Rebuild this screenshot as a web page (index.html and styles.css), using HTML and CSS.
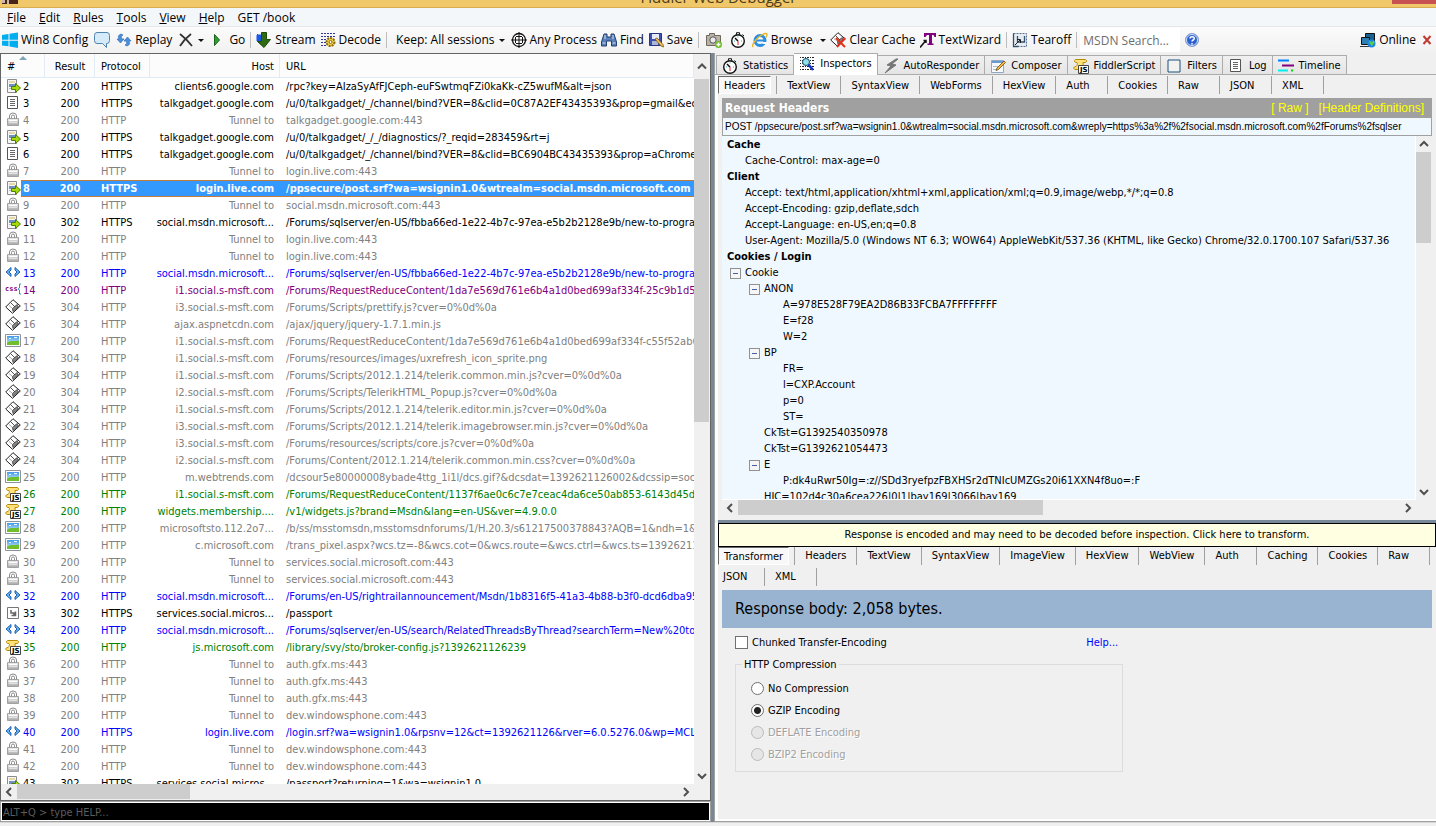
FILE: index.html
```html
<!DOCTYPE html>
<html lang="en">

<head>
  <meta charset="UTF-8">
  <title>Fiddler Web Debugger</title>
  <link rel="stylesheet" href="styles.css">
</head>

<body>

  <!-- shared icons -->
  <svg class="defs" aria-hidden="true">
    <linearGradient id="g-sky" x1="0" y1="0" x2="0" y2="1">
      <stop offset="0" stop-color="#3f9be8" />
      <stop offset="1" stop-color="#d8efff" />
    </linearGradient>
    <linearGradient id="g-lock" x1="0" y1="0" x2="0" y2="1">
      <stop offset="0" stop-color="#f0f0f0" />
      <stop offset="1" stop-color="#a8a8a8" />
    </linearGradient>
    <symbol id="i-post" viewBox="0 0 16 16">
      <path d="M2.500 1.500h9v13h-9z" fill="#f4f6f8" stroke="#8c8c8c" />
      <path d="M4 3h6v2H4z" fill="#e8d9a0" />
      <path d="M4 6h6v3H4z" fill="#6f93c4" />
      <path d="M4 10h3v1H4z" fill="#bbb" />
      <path d="M6.500 8.500h4v-3l5 4.500-5 4.500v-3h-4z" fill="#a6d80c" stroke="#4a7d00" />
    </symbol>
    <symbol id="i-doc" viewBox="0 0 16 16">
      <path d="M2.500 1.500h10v12h-10z" fill="#fff" stroke="#555" />
      <path d="M5 4.500h5M5 6.500h5M5 8.500h5M5 10.500h5" stroke="#666" />
    </symbol>
    <symbol id="i-lock" viewBox="0 0 16 16">
      <path d="M4.500 6V4q0-3 3.500-3t3.500 3v2" fill="none" stroke="#8a8a8a" />
      <path d="M6.500 6V4.500q0-1.500 1.500-1.500t1.500 1.500V6" fill="none" stroke="#8a8a8a" />
      <path d="M2.500 6.500h11v7h-11z" fill="url(#g-lock)" stroke="#a0a0a0" />
      <path d="M4 8.500h8" stroke="#fff" />
      <path d="M4 10.500h8" stroke="#e4e4e4" />
    </symbol>
    <symbol id="i-html" viewBox="0 0 16 16">
      <path d="M6 2.500 1 7l5 4.500V9L4 7l2-2z" fill="#6bb1ee" stroke="#1f62b0" />
      <path d="M10 2.500 15 7l-5 4.500V9l2-2-2-2z" fill="#6bb1ee" stroke="#1f62b0" />
    </symbol>
    <symbol id="i-css" viewBox="0 0 16 16">
      <text x="0" y="9" font-size="7" font-weight="bold" font-family="DejaVu Sans Mono, monospace" fill="#80007f">css</text>
      <path d="M16 2h-1.500v4L13 7l1.500 1v4H16" fill="none" stroke="#3a8fb0" />
    </symbol>
    <symbol id="i-cache" viewBox="0 0 16 16">
      <path d="M8 .7 15.300 7 7.500 14.300.7 8z" fill="#fff" stroke="#222" />
      <path d="M5.500 3.500 10 8l3-2.500" fill="none" stroke="#555" />
      <path d="M7.500 9.500 11.500 6l2 1.500-5.500 5z" fill="#8a8a8a" stroke="#333" stroke-width=".8" />
      <path d="M4 6.500 7 9" stroke="#aaa" />
    </symbol>
    <symbol id="i-img" viewBox="0 0 16 16">
      <path d="M.5 1.500h15v12H.5z" fill="#fff" stroke="#8d939b" />
      <path d="M2 3h12v9H2z" fill="url(#g-sky)" />
      <path d="M2 9.500c4-2.500 8-1 12-2V12H2z" fill="#6fbf2c" />
      <path d="M4 5h2v1H4zM9 4h3v1H9z" fill="#fff" />
    </symbol>
    <symbol id="i-js" viewBox="0 0 16 16">
      <path d="M3 1.500h9c2 0 2 3 0 3h-2c1 3-2 5-1 7H3c-3 0-3-3 0-3 1-1 2-3 1-4H3C1 4.500 1 1.500 3 1.500z" fill="#ffe27a" stroke="#b98a00" />
      <path d="M5.500 7.500h10v8h-10z" fill="#fff" stroke="#444" />
      <text x="7" y="14" font-size="7" font-weight="bold" font-family="DejaVu Sans, sans-serif" fill="#000">JS</text>
    </symbol>
    <symbol id="i-redir" viewBox="0 0 16 16">
      <path d="M2.500 2.500h11v11h-11z" fill="#fff" stroke="#777" />
      <path d="M6 5v3h3v3M6.500 10.500h4v-4" fill="none" stroke="#666" stroke-width="1.500" />
    </symbol>
    <symbol id="i-watch" viewBox="0 0 16 16">
      <circle cx="8" cy="9" r="6.300" fill="#fff" stroke="#111" stroke-width="1.400" />
      <path d="M6.500.7h3v2h-3zM12.500 2.500l1.500 1.500" fill="#fff" stroke="#111" />
      <path d="M8 9 5 6" stroke="#111" stroke-width="1.500" />
      <path d="M8 9v4" stroke="#e02020" />
      <path d="M8 4.500v1M12 9h-1M4 9h1" stroke="#3ab" />
    </symbol>
    <symbol id="i-up" viewBox="0 0 16 16">
      <path d="M4 10l4-4 4 4" fill="none" stroke="#505050" stroke-width="2" />
    </symbol>
    <symbol id="i-down" viewBox="0 0 16 16">
      <path d="M4 6l4 4 4-4" fill="none" stroke="#505050" stroke-width="2" />
    </symbol>
    <symbol id="i-left" viewBox="0 0 16 16">
      <path d="M10 4 6 8l4 4" fill="none" stroke="#505050" stroke-width="2" />
    </symbol>
    <symbol id="i-right" viewBox="0 0 16 16">
      <path d="M6 4l4 4-4 4" fill="none" stroke="#505050" stroke-width="2" />
    </symbol>
  </svg>

  <header class="titlebar">
    <svg class="appicon" viewBox="0 0 16 4"><path d="M0 0h16v4H0z" fill="#4a2418" /><path d="M0 0h3v3H0zM5 0h2v4H5z" fill="#c9b8ae" /></svg>
    <span class="caption">Fiddler Web Debugger</span>
    <span class="closebox"></span>
  </header>

  <nav class="menubar">
    <a href="#"><u>F</u>ile</a>
    <a href="#"><u>E</u>dit</a>
    <a href="#"><u>R</u>ules</a>
    <a href="#"><u>T</u>ools</a>
    <a href="#"><u>V</u>iew</a>
    <a href="#"><u>H</u>elp</a>
    <a href="#">GET /book</a>
  </nav>

  <div class="toolbar">
    <button type="button"><svg class="ico" viewBox="0 0 16 16"><path d="M0 3l6.500-1v5.700H0zM7.500 1.800 16 .5v7.200H7.500zM0 8.700h6.500v5.600L0 13.400zM7.500 8.700H16V16l-8.500-1.400z" fill="#00adef" /></svg>Win8 Config</button>
    <button type="button" class="wide" aria-label="Comment"><svg class="ico" viewBox="0 0 16 16"><path d="M3 .5h10q2.500 0 2.500 3v5q0 3-2.500 3h-.5V15.500l-4-4H3Q.5 11.500.5 8.500v-5q0-3 2.500-3z" fill="#d5ebfa" stroke="#4f83af" /></svg></button>
    <button type="button"><svg class="ico" viewBox="0 0 16 16"><path d="M5 2C2 3 2 5 3 7H1l3.500 4L8 7H6C5 5 5 4 7 3z" fill="#4a8fdc" stroke="#2b67b0" stroke-width=".6" /><path d="M11 14c3-1 3-3 2-5h2l-3.500-4L8 9h2c1 2 1 3-1 4z" fill="#4a8fdc" stroke="#2b67b0" stroke-width=".6" /></svg>Replay</button>
    <button type="button" class="wide" aria-label="Remove"><svg class="ico" viewBox="0 0 16 16"><path d="M2 2c4 3 8 7 12 12M13 2C9 5 5 9 2 14" fill="none" stroke="#333" stroke-width="1.800" /></svg><i class="caret"></i></button>
    <button type="button"><svg class="ico" viewBox="0 0 16 16"><path d="M4.500 2.500 9.500 8l-5 5.500z" fill="#2f9e2f" stroke="#17641a" /></svg>Go</button>
    <i class="sep"></i>
    <button type="button"><svg class="ico" viewBox="0 0 16 16"><path d="M1 3h5v6H1zM1 2 5 6" fill="#1c58e8" stroke="#1c58e8" /><path d="M5.500.5h5v7h4L8 15.500 1.500 9.500h4z" fill="#2f6b14" stroke="#1c4a08" /></svg>Stream</button>
    <button type="button"><svg class="ico" viewBox="0 0 16 16"><path d="M1 1.500h14M1 4.500h14M1 7.500h6M1 10.500h5M1 13.500h5" stroke="#33339c" stroke-dasharray="2 1" /><circle cx="10.500" cy="10" r="4" fill="#f3d34a" stroke="#8a6a00" stroke-dasharray="2 1" stroke-width="2" /><circle cx="10.500" cy="10" r="1.500" fill="#fff" stroke="#8a6a00" /></svg>Decode</button>
    <i class="sep"></i>
    <button type="button" class="keep">Keep: All sessions<i class="caret"></i></button>
    <button type="button"><svg class="ico" viewBox="0 0 16 16"><circle cx="8" cy="8" r="6.500" fill="#fff" stroke="#111" stroke-width="1.300" /><path d="M8 0v16M0 8h16M4.500 5v6M11.500 5v6M5 4.500h6M5 11.500h6" stroke="#111" stroke-width="1" /></svg>Any Process</button>
    <button type="button"><svg class="ico" viewBox="0 0 16 16"><path d="M3 2h3v3h4V2h3l2.500 8v4h-5V9h-5v5h-5v-4z" fill="#5b7fb8" stroke="#24406e" /><path d="M1.500 11h3M11.500 11h3M4 3v4M12 3v4" stroke="#cfe0f5" /></svg>Find</button>
    <button type="button"><svg class="ico" viewBox="0 0 16 16"><path d="M1.500 1.500h12v12h-12z" fill="#3f51b0" stroke="#27357e" /><path d="M4 2h7v5H4z" fill="#e4e9f8" /><path d="M4 9h6v4H4z" fill="#a9b6d8" /><path d="M7 7l6 7 2.500 1-.5-2.500-6-6.500z" fill="#f1c355" stroke="#7a5310" stroke-width=".8" /></svg>Save</button>
    <i class="sep"></i>
    <button type="button" class="wide" aria-label="Screenshot"><svg class="ico" viewBox="0 0 16 16"><path d="M.5 3.500h3v-2h5v2h6v10H.5z" fill="#b9b3a6" stroke="#6e695f" /><circle cx="7" cy="8" r="3.200" fill="#e9e9e9" stroke="#555" /><circle cx="12.500" cy="12.500" r="3.500" fill="#6cbf22" /><path d="M12.500 10.500v4M10.500 12.500h4" stroke="#fff" stroke-width="1.500" /></svg></button>
    <button type="button" class="wide" aria-label="Timer"><svg class="ico"><use href="#i-watch" /></svg></button>
    <button type="button" class="browse"><svg class="ico" viewBox="0 0 16 16"><circle cx="8" cy="8.500" r="5" fill="none" stroke="#2a8ee0" stroke-width="3" /><path d="M4 8.500h9" stroke="#2a8ee0" stroke-width="2" /><path d="M10.500 10h5v2h-5z" fill="#fafafa" /><path d="M1 15C-1 12 7 3 13 1.500c3-.5 2 2 1 4" fill="none" stroke="#e8b72a" stroke-width="1.500" /></svg>Browse<i class="caret"></i></button>
    <button type="button"><svg class="ico" viewBox="0 0 16 16"><use href="#i-cache" /><path d="M6 6l9 9M15 6l-8 9" stroke="#e23018" stroke-width="2" /></svg>Clear Cache</button>
    <button type="button"><svg class="ico" viewBox="0 0 16 16"><path d="M4 1h12v4h-1.500L13.500 3H12v8.500h1.500V13h-6v-1.500H9V3H7L5.500 5H4z" fill="#80007f" /><path d="M0 15.500 5.500 9M3.500 8.500H6V11" fill="none" stroke="#111" stroke-width="1.500" /></svg>TextWizard</button>
    <i class="sep"></i>
    <button type="button"><svg class="ico" viewBox="0 0 16 16"><path d="M1.500 1.500h13v13h-13z" fill="#e7ecf3" stroke="#58708f" stroke-dasharray="2 1" /><path d="M1.500 1.500v13h5M5.500 4v6h7V4" fill="none" stroke="#33506f" stroke-width="1.300" /><path d="M3 13l5-5M5 7.500h3.500V11" fill="none" stroke="#222" /></svg>Tearoff</button>
    <i class="sep"></i>
    <input class="msdn" type="text" aria-label="MSDN search" placeholder="MSDN Search...">
    <button type="button" class="wide" aria-label="Help"><svg class="ico" viewBox="0 0 16 16"><circle cx="8" cy="8" r="6.500" fill="#2a5fd0" stroke="#8aa0cc" /><circle cx="8" cy="8" r="5.500" fill="none" stroke="#d6e2fb" /><path d="M6 6.500C6 4 10.300 4 10.300 6.500 10.300 8 8 8 8 9.500M8 11v1.500" fill="none" stroke="#fff" stroke-width="1.500" /></svg></button>
    <button type="button" class="online"><svg class="ico" viewBox="0 0 16 16"><path d="M5.500 1.500h9v8h-9z" fill="#1a6390" stroke="#111" /><path d="M1.500 5.500h8v7h-8z" fill="#2d7fb0" stroke="#111" /><path d="M0 14.500h10" stroke="#333" /><circle cx="11.500" cy="11.500" r="4" fill="#1f86e8" /><path d="M9 9l3 1 2-1.500.5 2L12 14l-2-2z" fill="#55d04a" /></svg>Online</button>
    <button type="button" class="wide" aria-label="Close toolbar"><svg class="cross" viewBox="0 0 10 10"><path d="M1.500 1l7 8M8.500 1l-7 8" stroke="#c03a34" stroke-width="2" /></svg></button>
  </div>

  <main class="workspace">

    <section class="sessions">
      <div class="grid">
        <div class="listview">
          <table>
            <colgroup>
              <col class="c-icon">
              <col class="c-id">
              <col class="c-result">
              <col class="c-protocol">
              <col class="c-host">
              <col>
            </colgroup>
            <thead>
              <tr>
                <th colspan="2" class="sorted">#</th>
                <th>Result</th>
                <th>Protocol</th>
                <th>Host</th>
                <th>URL</th>
              </tr>
            </thead>
            <tbody>
              <tr><td><svg class="ico"><use href="#i-post" /></svg></td><td>2</td><td>200</td><td>HTTPS</td><td>clients6.google.com</td><td>/rpc?key=AIzaSyAfFJCeph-euFSwtmqFZi0kaKk-cZ5wufM&amp;alt=json</td></tr>
              <tr><td><svg class="ico"><use href="#i-doc" /></svg></td><td>3</td><td>200</td><td>HTTPS</td><td>talkgadget.google.com</td><td>/u/0/talkgadget/_/channel/bind?VER=8&amp;clid=0C87A2EF43435393&amp;prop=gmail&amp;ec=%5B</td></tr>
              <tr class="dim"><td><svg class="ico"><use href="#i-lock" /></svg></td><td>4</td><td>200</td><td>HTTP</td><td>Tunnel to</td><td>talkgadget.google.com:443</td></tr>
              <tr><td><svg class="ico"><use href="#i-post" /></svg></td><td>5</td><td>200</td><td>HTTPS</td><td>talkgadget.google.com</td><td>/u/0/talkgadget/_/_/diagnostics/?_reqid=283459&amp;rt=j</td></tr>
              <tr><td><svg class="ico"><use href="#i-doc" /></svg></td><td>6</td><td>200</td><td>HTTPS</td><td>talkgadget.google.com</td><td>/u/0/talkgadget/_/channel/bind?VER=8&amp;clid=BC6904BC43435393&amp;prop=aChromeExt</td></tr>
              <tr class="dim"><td><svg class="ico"><use href="#i-lock" /></svg></td><td>7</td><td>200</td><td>HTTP</td><td>Tunnel to</td><td>login.live.com:443</td></tr>
              <tr class="selected"><td><svg class="ico"><use href="#i-post" /></svg></td><td>8</td><td>200</td><td>HTTPS</td><td>login.live.com</td><td>/ppsecure/post.srf?wa=wsignin1.0&amp;wtrealm=social.msdn.microsoft.com</td></tr>
              <tr class="dim"><td><svg class="ico"><use href="#i-lock" /></svg></td><td>9</td><td>200</td><td>HTTP</td><td>Tunnel to</td><td>social.msdn.microsoft.com:443</td></tr>
              <tr><td><svg class="ico"><use href="#i-post" /></svg></td><td>10</td><td>302</td><td>HTTPS</td><td>social.msdn.microsoft...</td><td>/Forums/sqlserver/en-US/fbba66ed-1e22-4b7c-97ea-e5b2b2128e9b/new-to-programming</td></tr>
              <tr class="dim"><td><svg class="ico"><use href="#i-lock" /></svg></td><td>11</td><td>200</td><td>HTTP</td><td>Tunnel to</td><td>login.live.com:443</td></tr>
              <tr class="dim"><td><svg class="ico"><use href="#i-lock" /></svg></td><td>12</td><td>200</td><td>HTTP</td><td>Tunnel to</td><td>login.live.com:443</td></tr>
              <tr class="html"><td><svg class="ico"><use href="#i-html" /></svg></td><td>13</td><td>200</td><td>HTTP</td><td>social.msdn.microsoft...</td><td>/Forums/sqlserver/en-US/fbba66ed-1e22-4b7c-97ea-e5b2b2128e9b/new-to-programming</td></tr>
              <tr class="css"><td><svg class="ico"><use href="#i-css" /></svg></td><td>14</td><td>200</td><td>HTTP</td><td>i1.social.s-msft.com</td><td>/Forums/RequestReduceContent/1da7e569d761e6b4a1d0bed699af334f-25c9b1d5c</td></tr>
              <tr class="dim"><td><svg class="ico"><use href="#i-cache" /></svg></td><td>15</td><td>304</td><td>HTTP</td><td>i3.social.s-msft.com</td><td>/Forums/Scripts/prettify.js?cver=0%0d%0a</td></tr>
              <tr class="dim"><td><svg class="ico"><use href="#i-cache" /></svg></td><td>16</td><td>304</td><td>HTTP</td><td>ajax.aspnetcdn.com</td><td>/ajax/jquery/jquery-1.7.1.min.js</td></tr>
              <tr class="dim"><td><svg class="ico"><use href="#i-img" /></svg></td><td>17</td><td>200</td><td>HTTP</td><td>i1.social.s-msft.com</td><td>/Forums/RequestReduceContent/1da7e569d761e6b4a1d0bed699af334f-c55f52ab66</td></tr>
              <tr class="dim"><td><svg class="ico"><use href="#i-cache" /></svg></td><td>18</td><td>304</td><td>HTTP</td><td>i1.social.s-msft.com</td><td>/Forums/resources/images/uxrefresh_icon_sprite.png</td></tr>
              <tr class="dim"><td><svg class="ico"><use href="#i-cache" /></svg></td><td>19</td><td>304</td><td>HTTP</td><td>i1.social.s-msft.com</td><td>/Forums/Scripts/2012.1.214/telerik.common.min.js?cver=0%0d%0a</td></tr>
              <tr class="dim"><td><svg class="ico"><use href="#i-cache" /></svg></td><td>20</td><td>304</td><td>HTTP</td><td>i2.social.s-msft.com</td><td>/Forums/Scripts/TelerikHTML_Popup.js?cver=0%0d%0a</td></tr>
              <tr class="dim"><td><svg class="ico"><use href="#i-cache" /></svg></td><td>21</td><td>304</td><td>HTTP</td><td>i1.social.s-msft.com</td><td>/Forums/Scripts/2012.1.214/telerik.editor.min.js?cver=0%0d%0a</td></tr>
              <tr class="dim"><td><svg class="ico"><use href="#i-cache" /></svg></td><td>22</td><td>304</td><td>HTTP</td><td>i3.social.s-msft.com</td><td>/Forums/Scripts/2012.1.214/telerik.imagebrowser.min.js?cver=0%0d%0a</td></tr>
              <tr class="dim"><td><svg class="ico"><use href="#i-cache" /></svg></td><td>23</td><td>304</td><td>HTTP</td><td>i3.social.s-msft.com</td><td>/Forums/resources/scripts/core.js?cver=0%0d%0a</td></tr>
              <tr class="dim"><td><svg class="ico"><use href="#i-cache" /></svg></td><td>24</td><td>304</td><td>HTTP</td><td>i2.social.s-msft.com</td><td>/Forums/Content/2012.1.214/telerik.common.min.css?cver=0%0d%0a</td></tr>
              <tr class="dim"><td><svg class="ico"><use href="#i-img" /></svg></td><td>25</td><td>200</td><td>HTTP</td><td>m.webtrends.com</td><td>/dcsour5e80000008ybade4ttg_1i1l/dcs.gif?&amp;dcsdat=1392621126002&amp;dcssip=social.</td></tr>
              <tr class="js"><td><svg class="ico"><use href="#i-js" /></svg></td><td>26</td><td>200</td><td>HTTP</td><td>i1.social.s-msft.com</td><td>/Forums/RequestReduceContent/1137f6ae0c6c7e7ceac4da6ce50ab853-6143d45df2</td></tr>
              <tr class="js"><td><svg class="ico"><use href="#i-js" /></svg></td><td>27</td><td>200</td><td>HTTP</td><td>widgets.membership....</td><td>/v1/widgets.js?brand=Msdn&amp;lang=en-US&amp;ver=4.9.0.0</td></tr>
              <tr class="dim"><td><svg class="ico"><use href="#i-img" /></svg></td><td>28</td><td>200</td><td>HTTP</td><td>microsoftsto.112.2o7...</td><td>/b/ss/msstomsdn,msstomsdnforums/1/H.20.3/s61217500378843?AQB=1&amp;ndh=1&amp;t=1</td></tr>
              <tr class="dim"><td><svg class="ico"><use href="#i-img" /></svg></td><td>29</td><td>200</td><td>HTTP</td><td>c.microsoft.com</td><td>/trans_pixel.aspx?wcs.tz=-8&amp;wcs.cot=0&amp;wcs.route=&amp;wcs.ctrl=&amp;wcs.ts=139262112</td></tr>
              <tr class="dim"><td><svg class="ico"><use href="#i-lock" /></svg></td><td>30</td><td>200</td><td>HTTP</td><td>Tunnel to</td><td>services.social.microsoft.com:443</td></tr>
              <tr class="dim"><td><svg class="ico"><use href="#i-lock" /></svg></td><td>31</td><td>200</td><td>HTTP</td><td>Tunnel to</td><td>services.social.microsoft.com:443</td></tr>
              <tr class="html"><td><svg class="ico"><use href="#i-html" /></svg></td><td>32</td><td>200</td><td>HTTP</td><td>social.msdn.microsoft...</td><td>/Forums/en-US/rightrailannouncement/Msdn/1b8316f5-41a3-4b88-b3f0-dcd6dba958</td></tr>
              <tr><td><svg class="ico"><use href="#i-redir" /></svg></td><td>33</td><td>302</td><td>HTTPS</td><td>services.social.micros...</td><td>/passport</td></tr>
              <tr class="html"><td><svg class="ico"><use href="#i-html" /></svg></td><td>34</td><td>200</td><td>HTTP</td><td>social.msdn.microsoft...</td><td>/Forums/sqlserver/en-US/search/RelatedThreadsByThread?searchTerm=New%20to</td></tr>
              <tr class="js"><td><svg class="ico"><use href="#i-js" /></svg></td><td>35</td><td>200</td><td>HTTP</td><td>js.microsoft.com</td><td>/library/svy/sto/broker-config.js?1392621126239</td></tr>
              <tr class="dim"><td><svg class="ico"><use href="#i-lock" /></svg></td><td>36</td><td>200</td><td>HTTP</td><td>Tunnel to</td><td>auth.gfx.ms:443</td></tr>
              <tr class="dim"><td><svg class="ico"><use href="#i-lock" /></svg></td><td>37</td><td>200</td><td>HTTP</td><td>Tunnel to</td><td>auth.gfx.ms:443</td></tr>
              <tr class="dim"><td><svg class="ico"><use href="#i-lock" /></svg></td><td>38</td><td>200</td><td>HTTP</td><td>Tunnel to</td><td>auth.gfx.ms:443</td></tr>
              <tr class="dim"><td><svg class="ico"><use href="#i-lock" /></svg></td><td>39</td><td>200</td><td>HTTP</td><td>Tunnel to</td><td>dev.windowsphone.com:443</td></tr>
              <tr class="html"><td><svg class="ico"><use href="#i-html" /></svg></td><td>40</td><td>200</td><td>HTTPS</td><td>login.live.com</td><td>/login.srf?wa=wsignin1.0&amp;rpsnv=12&amp;ct=1392621126&amp;rver=6.0.5276.0&amp;wp=MCLBI</td></tr>
              <tr class="dim"><td><svg class="ico"><use href="#i-lock" /></svg></td><td>41</td><td>200</td><td>HTTP</td><td>Tunnel to</td><td>dev.windowsphone.com:443</td></tr>
              <tr class="dim"><td><svg class="ico"><use href="#i-lock" /></svg></td><td>42</td><td>200</td><td>HTTP</td><td>Tunnel to</td><td>dev.windowsphone.com:443</td></tr>
              <tr><td><svg class="ico"><use href="#i-post" /></svg></td><td>43</td><td>302</td><td>HTTPS</td><td>services.social.micros...</td><td>/passport?returning=1&amp;wa=wsignin1.0</td></tr>
            </tbody>
          </table>
        </div>
        <div class="vscroll">
          <svg class="arrow top"><use href="#i-up" /></svg>
          <i class="thumb tall"></i>
          <svg class="arrow"><use href="#i-down" /></svg>
        </div>
        <div class="hscroll">
          <svg class="arrow"><use href="#i-left" /></svg>
          <i class="thumb short"></i>
          <svg class="arrow"><use href="#i-right" /></svg>
        </div>
        <i class="corner"></i>
      </div>
      <input class="quickexec" type="text" aria-label="QuickExec" placeholder="ALT+Q &gt; type HELP...">
    </section>

    <i class="splitter"></i>

    <section class="details">
      <div class="tabs">
        <button type="button"><svg class="ico"><use href="#i-watch" /></svg>Statistics</button>
        <button type="button" class="active"><svg class="ico" viewBox="0 0 16 16"><path d="M1 1.500h14M1 4.500h14M1 7.500h14M1 10.500h14M1 13.500h14" stroke="#222" stroke-dasharray="1 1 2 1" /><circle cx="7" cy="6" r="3.500" fill="#8fe0e8" stroke="#134a66" /><path d="M9.500 8.500 14 14" stroke="#1133cc" stroke-width="2.500" /></svg>Inspectors</button>
        <button type="button"><svg class="ico" viewBox="0 0 16 16"><path d="M13 1 4 7l4 1-6 7 11-8-4-1 6-5z" fill="#777" stroke="#777" /></svg>AutoResponder</button>
        <button type="button"><svg class="ico" viewBox="0 0 16 16"><path d="M1.500 2.500h12v12h-12z" fill="#f5f9fd" stroke="#8fa9c4" /><path d="M2 3h11v2H2z" fill="#6c9bd0" /><path d="M3 8.500h5M3 11.500h4" stroke="#a9bdd2" /><path d="M14 3l1.500 1.500-7 7L6 12.500 7 10z" fill="#f5b942" stroke="#6d4a14" stroke-width=".8" /></svg>Composer</button>
        <button type="button"><svg class="ico"><use href="#i-js" /></svg>FiddlerScript</button>
        <button type="button"><svg class="ico" viewBox="0 0 16 16"><path d="M2 2h12v12H2z" fill="#f2f2ee" stroke="#1c5180" /></svg>Filters</button>
        <button type="button"><svg class="ico"><use href="#i-doc" /></svg>Log</button>
        <button type="button"><svg class="ico" viewBox="0 0 16 16"><path d="M0 2.500h11" stroke="#0080ff" stroke-width="2" /><path d="M4 7.500h12" stroke="#80007f" stroke-width="2" /><path d="M0 12.500h10" stroke="#00f0f0" stroke-width="2" /><path d="M13 12.500h2" stroke="#00e000" stroke-width="2" /></svg>Timeline</button>
      </div>

      <div class="request">
        <div class="subtabs">
          <button type="button" class="active">Headers</button>
          <button type="button">TextView</button>
          <button type="button">SyntaxView</button>
          <button type="button">WebForms</button>
          <button type="button">HexView</button>
          <button type="button">Auth</button>
          <button type="button">Cookies</button>
          <button type="button">Raw</button>
          <button type="button">JSON</button>
          <button type="button">XML</button>
        </div>
        <div class="headerbar">
          <h2>Request Headers</h2>
          <a href="#">[ Raw ]</a>
          <a href="#">[Header Definitions]</a>
        </div>
        <input class="requestline" type="text" aria-label="Request line" readonly value="POST /ppsecure/post.srf?wa=wsignin1.0&amp;wtrealm=social.msdn.microsoft.com&amp;wreply=https%3a%2f%2fsocial.msdn.microsoft.com%2fForums%2fsqlser">
        <div class="treegrid">
          <ul class="tree">
            <li><b>Cache</b>
              <ul>
                <li>Cache-Control: max-age=0</li>
              </ul>
            </li>
            <li><b>Client</b>
              <ul>
                <li>Accept: text/html,application/xhtml+xml,application/xml;q=0.9,image/webp,*/*;q=0.8</li>
                <li>Accept-Encoding: gzip,deflate,sdch</li>
                <li>Accept-Language: en-US,en;q=0.8</li>
                <li>User-Agent: Mozilla/5.0 (Windows NT 6.3; WOW64) AppleWebKit/537.36 (KHTML, like Gecko) Chrome/32.0.1700.107 Safari/537.36</li>
              </ul>
            </li>
            <li><b>Cookies / Login</b>
              <ul>
                <li class="open">Cookie
                  <ul>
                    <li class="open">ANON
                      <ul>
                        <li>A=978E528F79EA2D86B33FCBA7FFFFFFFF</li>
                        <li>E=f28</li>
                        <li>W=2</li>
                      </ul>
                    </li>
                    <li class="open">BP
                      <ul>
                        <li>FR=</li>
                        <li>l=CXP.Account</li>
                        <li>p=0</li>
                        <li>ST=</li>
                      </ul>
                    </li>
                    <li>CkTst=G1392540350978</li>
                    <li>CkTst=G1392621054473</li>
                    <li class="open">E
                      <ul>
                        <li>P:dk4uRwr50Ig=:z//SDd3ryefpzFBXHSr2dTNIcUMZGs20i61XXN4f8uo=:F</li>
                      </ul>
                    </li>
                    <li>HIC=102d4c30a6cea226|0|1|bay169|3066|bay169</li>
                  </ul>
                </li>
              </ul>
            </li>
          </ul>
          <div class="vscroll">
            <svg class="arrow"><use href="#i-up" /></svg>
            <i class="thumb quarter"></i>
            <svg class="arrow"><use href="#i-down" /></svg>
          </div>
          <div class="hscroll">
            <svg class="arrow"><use href="#i-left" /></svg>
            <i class="thumb half"></i>
            <svg class="arrow"><use href="#i-right" /></svg>
          </div>
          <i class="corner"></i>
        </div>
      </div>

      <i class="hsplitter"></i>

      <div class="response">
        <button type="button" class="notice">Response is encoded and may need to be decoded before inspection. Click here to transform.</button>
        <div class="subtabs">
          <button type="button" class="active">Transformer</button>
          <button type="button">Headers</button>
          <button type="button">TextView</button>
          <button type="button">SyntaxView</button>
          <button type="button">ImageView</button>
          <button type="button">HexView</button>
          <button type="button">WebView</button>
          <button type="button">Auth</button>
          <button type="button">Caching</button>
          <button type="button">Cookies</button>
          <button type="button">Raw</button>
          <button type="button" class="first">JSON</button>
          <button type="button">XML</button>
        </div>
        <div class="bodysize">Response body: 2,058 bytes.</div>
        <form class="transformer">
          <div class="chunked">
            <label><input type="checkbox">Chunked Transfer-Encoding</label>
            <a href="#">Help...</a>
          </div>
          <fieldset>
            <legend>HTTP Compression</legend>
            <label><input type="radio" name="comp">No Compression</label>
            <label><input type="radio" name="comp" checked>GZIP Encoding</label>
            <label class="off"><input type="radio" name="comp" disabled>DEFLATE Encoding</label>
            <label class="off"><input type="radio" name="comp" disabled>BZIP2 Encoding</label>
          </fieldset>
        </form>
      </div>
    </section>

  </main>

  <footer class="statusbar"></footer>

</body>

</html>
```
FILE: styles.css
```css
:root {
  --ui: "Open Sans", "Noto Sans", sans-serif;
  --list: "DejaVu Sans Condensed", "DejaVu Sans", sans-serif;
  --face: #f0f0f0;
  --slate: #778899;
}

* {
  box-sizing: border-box;
}

body {
  margin: 0;
  height: 100vh;
  display: flex;
  flex-direction: column;
  overflow: hidden;
  background: var(--face);
  color: #000;
  font-family: var(--list);
  font-size: 11px;
  line-height: 16px;
}

button,
input {
  font: inherit;
  color: inherit;
  margin: 0;
}

button {
  border: 0;
  padding: 0;
  background: none;
  white-space: nowrap;
}

svg {
  display: block;
  flex: none;
}

.defs {
  position: absolute;
  width: 0;
  height: 0;
}

.ico {
  width: 16px;
  height: 16px;
}

/* title bar, menu, toolbar */

.titlebar {
  flex: none;
  height: 8px;
  display: flex;
  align-items: flex-end;
  justify-content: space-between;
  overflow: hidden;
  background: #f0c869;
  border-bottom: 1px solid #d9ac52;
}

.appicon {
  width: 16px;
  height: 4px;
  margin: 0 27px 3px 2px;
}

.caption {
  font-family: "Open Sans", sans-serif;
  font-size: 15px;
  line-height: 20px;
  color: #4a3c1c;
}

.closebox {
  width: 44px;
  height: 4px;
  margin-bottom: 3px;
  background: #c75050;
}

.menubar {
  flex: none;
  display: flex;
  gap: 13px;
  height: 19px;
  padding: 2px 7px 0;
  background: #f4f7f9;
  border-bottom: 1px solid #e6e6e8;
  font-family: var(--ui);
  font-size: 12px;
}

.menubar a {
  color: #000;
  text-decoration: none;
}

.toolbar {
  flex: none;
  display: flex;
  align-items: center;
  height: 26px;
  background: linear-gradient(#fbfbfb, #f1f1f1);
  font-family: var(--ui);
  font-size: 12px;
}

.toolbar button {
  display: flex;
  align-items: center;
  gap: 3px;
  padding: 0 2px;
}

.toolbar .wide {
  padding: 0 4px;
}

.sep {
  width: 1px;
  height: 16px;
  margin: 0 3px;
  background: #bdbdbd;
}

.caret {
  border: 3px solid transparent;
  border-top-color: #111;
  border-bottom: 0;
  margin-left: 1px;
}

.toolbar .browse .caret {
  margin-left: 5px;
}

.toolbar .keep {
  padding: 0 4px 0 6px;
}

.msdn {
  width: 100px;
  height: 24px;
  padding: 0 3px;
  border: 0;
  background: #fff;
}

.msdn::placeholder {
  color: #6d6d6d;
  opacity: 1;
}

.toolbar .online {
  margin-left: auto;
}

.cross {
  width: 10px;
  height: 10px;
}

/* workspace */

.workspace {
  flex: 1;
  min-height: 0;
  display: grid;
  grid-template-columns: minmax(0, 711fr) 3px minmax(0, 722fr);
}

.splitter {
  background: var(--slate);
}

.sessions {
  display: flex;
  flex-direction: column;
  min-height: 0;
}

.grid {
  flex: 1;
  min-height: 0;
  display: grid;
  grid-template: minmax(0, 1fr) 16px / minmax(0, 1fr) 16px;
  background: #fff;
  border: 1px solid #646464;
}

.listview {
  overflow: hidden;
}

.listview table {
  width: 100%;
  table-layout: fixed;
  border-collapse: collapse;
}

.c-icon {
  width: 20px;
}

.c-id {
  width: 24px;
}

.c-result {
  width: 50px;
}

.c-protocol {
  width: 55px;
}

.c-host {
  width: 130px;
}

.listview th {
  height: 24px;
  padding: 2px 6px 0;
  background: #fcfcfc;
  box-shadow: inset -1px -1px #e2ecf6;
  font-weight: normal;
  text-align: left;
}

.listview th:nth-child(2) {
  text-align: center;
}

.listview th:nth-child(4) {
  text-align: right;
}

.listview .sorted {
  position: relative;
}

.sorted::after {
  content: "";
  position: absolute;
  top: 2px;
  left: 18px;
  border: 4px solid transparent;
  border-top: 0;
  border-bottom-color: #7fa3b8;
}

.listview td {
  height: 17px;
  padding: 1px 6px 0;
  vertical-align: top;
  white-space: nowrap;
  overflow: hidden;
}

.listview td:nth-child(1) {
  padding: 0 0 0 4px;
}

.listview td:nth-child(2) {
  padding: 1px 0 0 2px;
}

.listview td:nth-child(3) {
  text-align: center;
}

.listview td:nth-child(5) {
  padding-left: 0;
  text-align: right;
}

.listview td:nth-child(6) {
  padding-right: 0;
}

.dim {
  color: #808080;
}

.html {
  color: #0000ff;
}

.css {
  color: #800080;
}

.js {
  color: #008000;
}

.selected {
  color: #fff;
  font-weight: bold;
}

.selected td + td {
  background: #3399ff;
  box-shadow: inset 0 1px #c77a3c, inset 0 -1px #c77a3c;
}

.vscroll,
.hscroll {
  display: flex;
  background: var(--face);
}

.vscroll {
  flex-direction: column;
}

.hscroll .arrow:last-child {
  margin-left: auto;
}

.vscroll .arrow:last-child {
  margin-top: auto;
}

.arrow {
  width: 16px;
  height: 16px;
}

.vscroll .top {
  height: 25px;
}

.thumb {
  background: #cdcdcd;
}

.vscroll .thumb {
  width: 15px;
}

.hscroll .thumb {
  height: 15px;
}

.tall {
  height: 47%;
}

.short {
  width: 25%;
}

.quarter {
  height: 25%;
}

.half {
  width: 44%;
}

.corner {
  background: var(--face);
}

.quickexec {
  flex: none;
  width: 100%;
  height: 21px;
  padding: 1px 1px 0;
  border: 2px solid #fff;
  outline: 1px solid #a0a0a0;
  outline-offset: -1px;
  background: #000;
  color: #fff;
}

.quickexec::placeholder {
  color: #5c5c5c;
  opacity: 1;
}

/* inspectors */

.details {
  display: flex;
  flex-direction: column;
  min-height: 0;
  border-left: 1px solid #a0a0a0;
  border-bottom: 1px solid #a0a0a0;
}

.tabs {
  flex: none;
  display: flex;
  align-items: flex-end;
  height: 22px;
  padding-left: 1px;
  border-bottom: 1px solid #acacac;
}

.tabs button {
  display: flex;
  align-items: center;
  gap: 5px;
  height: 19px;
  padding: 2px 5px 0;
  background: linear-gradient(#f0f0f0, #e5e5e5);
  border: 1px solid #acacac;
  border-width: 1px 1px 0;
}

.tabs button + button {
  border-left: 0;
}

.tabs .active {
  height: 22px;
  margin-bottom: -1px;
  padding: 0 5px 1px;
  background: #fff;
}

.request,
.response {
  display: flex;
  flex-direction: column;
  min-height: 0;
  border-left: 3px solid #fff;
}

.request {
  flex: 444 1 0;
  padding: 1px 0 4px;
}

.response {
  flex: 299 1 0;
  border-bottom: 2px solid #fff;
}

.subtabs {
  flex: none;
  display: flex;
  flex-wrap: wrap;
  row-gap: 3px;
}

.subtabs button {
  min-width: 52px;
  height: 18px;
  padding: 1px 10px 0;
  border-right: 1px solid #a0a0a0;
  text-align: left;
}

.subtabs .active {
  min-width: 0;
  margin-right: 5px;
  padding: 1px 5px 0;
  background: #f8f8f8;
  border: 1px solid #fff;
  border-top-color: #696969;
  border-left-color: #696969;
}

.subtabs .active + button {
  border-left: 1px solid #a0a0a0;
}

.subtabs .first {
  min-width: 47px;
  padding-left: 5px;
}

.headerbar {
  flex: none;
  display: flex;
  align-items: center;
  gap: 10px;
  height: 19px;
  margin: 4px 4px 0;
  padding: 0 8px 0 3px;
  background: #a0a0a0;
}

.headerbar h2 {
  flex: 1;
  margin: 0;
  color: #fff;
  font-size: 12px;
  line-height: 18px;
}

.headerbar a {
  color: #ffff00;
  font-family: "Liberation Sans", sans-serif;
  font-size: 12px;
  text-decoration: none;
}

.requestline {
  flex: none;
  height: 19px;
  margin: 0 4px;
  padding: 0 2px;
  border: 1px solid #a0a0a0;
  background: #f0f8ff;
  font-family: "Liberation Sans", sans-serif;
  font-size: 10px;
}

.treegrid {
  flex: 1;
  min-height: 0;
  display: grid;
  grid-template: minmax(0, 1fr) 16px / minmax(0, 1fr) 16px;
  margin: 0 4px;
}

.tree {
  overflow: hidden;
  background: #f0f8ff;
  border: 1px solid #fff;
  border-width: 0 1px 1px 0;
  white-space: nowrap;
}

.tree,
.tree ul {
  margin: 0;
  padding: 0;
  list-style: none;
}

.tree {
  padding: 1px 0 0 5px;
}

.tree ul {
  padding-left: 19px;
}

.tree > li > ul {
  padding-left: 18px;
}

.open {
  position: relative;
}

.open::before {
  content: "";
  position: absolute;
  left: -15px;
  top: 3px;
  width: 9px;
  height: 9px;
  border: 1px solid #919191;
  background: linear-gradient(#4560a8, #4560a8) center / 5px 1px no-repeat #f6f6f6;
}

.hsplitter {
  flex: none;
  height: 3px;
  margin-left: 3px;
  background: var(--slate);
}

.notice {
  flex: none;
  height: 24px;
  padding-top: 1px;
  border: 1px solid #000;
  background: #ffffe1;
}

.bodysize {
  flex: none;
  height: 38px;
  margin: 4px 4px 0;
  padding-left: 13px;
  background: #99b4d1;
  font-size: 16px;
  line-height: 38px;
}

.transformer {
  width: 57%;
  padding: 7px 4px 0 17px;
}

.chunked {
  display: flex;
  justify-content: space-between;
  padding-right: 5px;
}

.chunked a {
  color: #0000ff;
  text-decoration: none;
}

label {
  display: flex;
  align-items: center;
  gap: 4px;
}

label input {
  width: 13px;
  height: 13px;
  appearance: none;
  border: 1px solid #707070;
  background: #fff;
}

label input[type="radio"] {
  border-radius: 50%;
}

label input[type="radio"]:checked {
  background: radial-gradient(circle, #222 3px, #fff 4px);
}

.off {
  color: #a0a0a0;
  text-shadow: 1px 1px #fff;
}

.off input {
  border-color: #bcbcbc;
  background: #e6e6e6;
}

fieldset {
  display: flex;
  flex-direction: column;
  gap: 6px;
  margin: 6px 0 0;
  padding: 8px 15px;
  border: 1px solid #dcdcdc;
}

legend {
  margin-left: -9px;
  padding: 0 2px;
}

.statusbar {
  flex: none;
  height: 4px;
  border-top: 1px solid #d7d7d7;
}
```
